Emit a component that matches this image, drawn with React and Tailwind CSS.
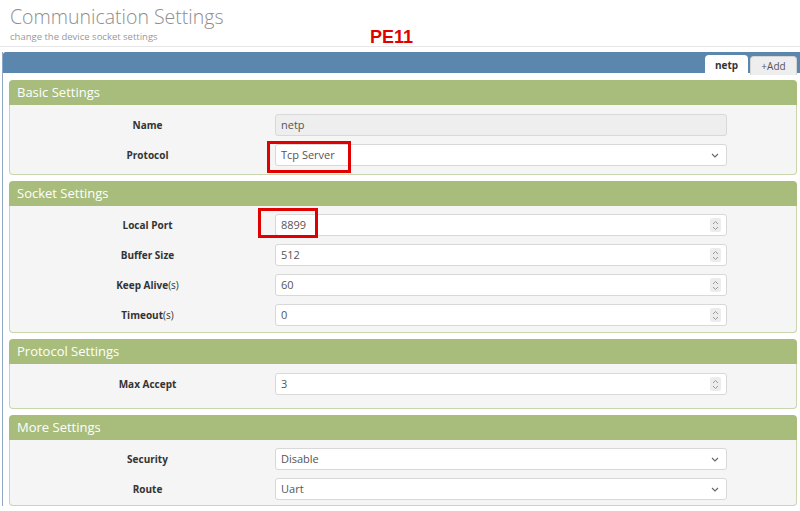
import React from 'react';

const Spinner = () => (
  <span className="flex h-[14px] w-[11px] items-center justify-center rounded-[2px] bg-[#ececec]">
    <svg width="7" height="11" viewBox="0 0 7 11" fill="none" stroke="#9a9a9a" strokeWidth="1">
      <path d="M1 4 L3.5 1.5 L6 4" />
      <path d="M1 7 L3.5 9.5 L6 7" />
    </svg>
  </span>
);

const Chevron = () => (
  <svg width="8" height="5" viewBox="0 0 8 5" fill="none" stroke="#666" strokeWidth="1.1">
    <path d="M1 1 L4 4 L7 1" />
  </svg>
);

function Field({ label, suffix, value, kind }) {
  const base =
    'flex h-[22px] w-[452px] items-center justify-between rounded-[3px] border border-[#d8d8d8] px-[5px] text-[11px] text-[#555]';
  return (
    <div className="flex h-[22px] items-center">
      <div className="w-[265px] pl-[10px] text-center text-[10px] text-[#333]">
        <span className="font-bold">{label}</span>
        {suffix && <span>{suffix}</span>}
      </div>
      <div className={`${base} ${kind === 'disabled' ? 'bg-[#eeeeee]' : 'bg-white'}`}>
        <span>{value}</span>
        {kind === 'number' && <Spinner />}
        {kind === 'select' && (
          <span className="pr-[2px]">
            <Chevron />
          </span>
        )}
      </div>
    </div>
  );
}

function Section({ title, rows, pad = 'pt-[8px] pb-[8px]' }) {
  return (
    <div>
      <div className="flex h-[25px] items-center rounded-t-[4px] bg-[#a8bd7c] px-[8px] text-[13px] text-white">
        {title}
      </div>
      <div className={`flex flex-col gap-[8px] rounded-b-[4px] border border-t-0 border-[#c9d6ae] bg-[#f4f5f4] ${pad}`}>
        {rows.map((r) => (
          <Field key={r.label} {...r} />
        ))}
      </div>
    </div>
  );
}

export default function App() {
  return (
    <div className="relative h-[511px] w-[800px] overflow-hidden bg-white font-['Open_Sans',sans-serif]">
      <header className="h-[47px] border-b border-[#e6e6e6] px-[10px] pt-[3px]">
        <h1 className="text-[19.5px] font-light leading-[27px] text-[#8e8e8e]">Communication Settings</h1>
        <p className="mt-[1px] text-[9.5px] leading-[12px] text-[#999]">change the device socket settings</p>
      </header>
      <span className="absolute left-[370px] top-[24px] font-['Liberation_Sans',sans-serif] text-[18px] font-bold text-[#e00000]">
        PE11
      </span>

      <main className="ml-[2px] mt-[5px] border-l border-[#8fa7c2]">
        <div className="flex h-[21px] items-end justify-end rounded-tl-[3px] bg-[#5b86ad] pr-[3px]">
          <div className="-mb-[2px] flex h-[20px] w-[43px] items-center justify-center rounded-t-[4px] bg-white text-[10px] font-bold text-[#333]">
            netp
          </div>
          <div className="-mb-[2px] ml-[2px] flex h-[19px] w-[47px] items-center justify-center rounded-t-[4px] border border-b-0 border-[#d4d4d4] bg-[#eeeeee] text-[10px] text-[#555]">
            +Add
          </div>
        </div>
        <div className="flex flex-col gap-[6px] pl-[6px] pr-[3px] pt-[7px]">
          <Section
            title="Basic Settings"
            pad="pt-[9px] pb-[8px]"
            rows={[
              { label: 'Name', value: 'netp', kind: 'disabled' },
              { label: 'Protocol', value: 'Tcp Server', kind: 'select' },
            ]}
          />
          <Section
            title="Socket Settings"
            pad="pt-[8px] pb-[6px]"
            rows={[
              { label: 'Local Port', value: '8899', kind: 'number' },
              { label: 'Buffer Size', value: '512', kind: 'number' },
              { label: 'Keep Alive', suffix: '(s)', value: '60', kind: 'number' },
              { label: 'Timeout', suffix: '(s)', value: '0', kind: 'number' },
            ]}
          />
          <Section
            title="Protocol Settings"
            pad="pt-[9px] pb-[13px]"
            rows={[{ label: 'Max Accept', value: '3', kind: 'number' }]}
          />
          <Section
            title="More Settings"
            pad="pt-[8px] pb-[5px]"
            rows={[
              { label: 'Security', value: 'Disable', kind: 'select' },
              { label: 'Route', value: 'Uart', kind: 'select' },
            ]}
          />
        </div>
      </main>

      <div className="pointer-events-none absolute left-[267px] top-[141px] h-[32px] w-[84px] border-[3px] border-[#e00000]" />
      <div className="pointer-events-none absolute left-[258px] top-[208px] h-[30px] w-[60px] border-[3px] border-[#e00000]" />
    </div>
  );
}
